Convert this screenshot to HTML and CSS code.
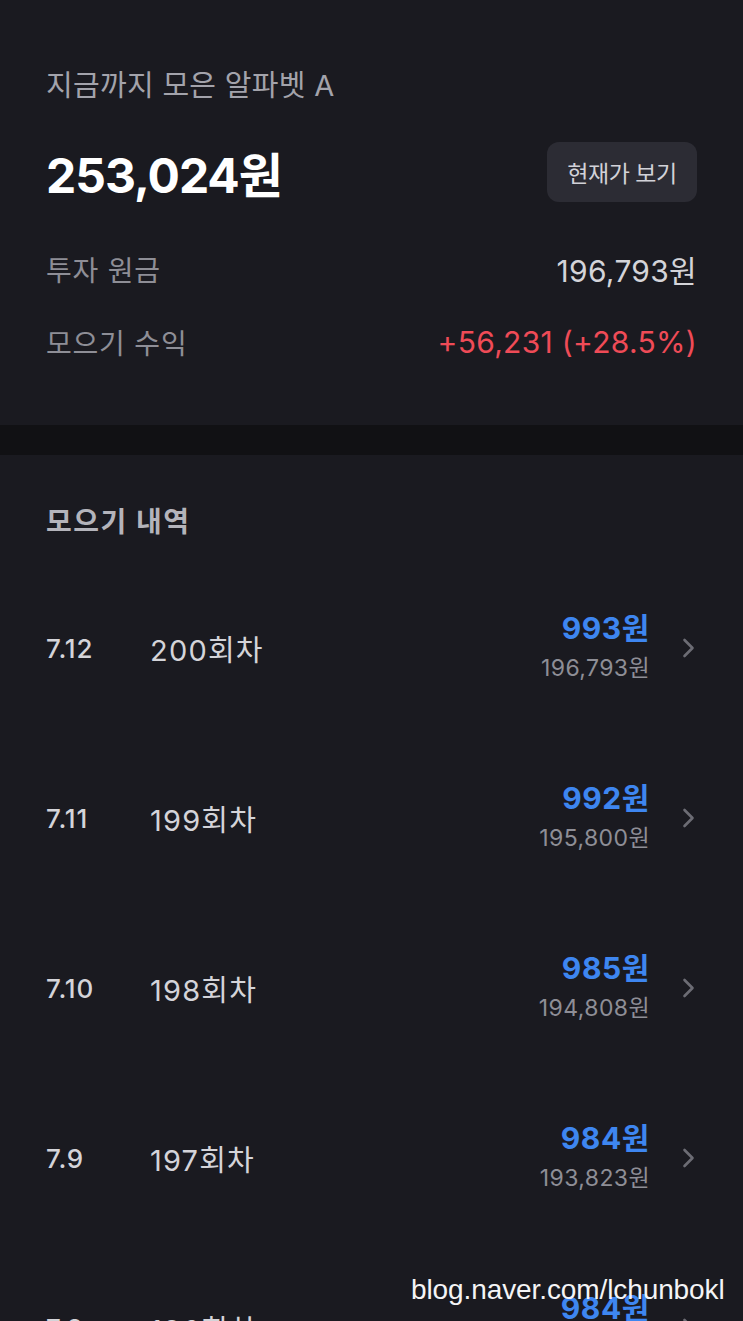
FILE: index.html
```html
<!DOCTYPE html>
<html lang="ko">
<head>
	<meta charset="UTF-8">
	<meta name="viewport" content="width=device-width, initial-scale=1.0">
	<title>알파벳 A 모으기</title>
	<link rel="stylesheet" href="styles.css">
</head>
<body>
	<div class="summary">
		<div class="summary-title">지금까지 모은 알파벳 A</div>
		<div class="hero">
			<span class="hero-amount">253,024원</span>
			<button class="price-button">현재가 보기</button>
		</div>
		<div class="stat-row">
			<span class="stat-label">투자 원금</span>
			<span class="stat-value">196,793원</span>
		</div>
		<div class="stat-row second">
			<span class="stat-label">모으기 수익</span>
			<span class="stat-value profit">+56,231 (+28.5%)</span>
		</div>
	</div>

	<div class="divider"></div>

	<div class="history">
		<div class="history-title">모으기 내역</div>
		<div class="history-list" id="history-list">
			<!-- Rows are populated here -->
		</div>
	</div>

	<div class="watermark">blog.naver.com/lchunbokl</div>

	<script>
		const rows = [
			{ date: '7.12', round: 200, price: '993원', total: '196,793원' },
			{ date: '7.11', round: 199, price: '992원', total: '195,800원' },
			{ date: '7.10', round: 198, price: '985원', total: '194,808원' },
			{ date: '7.9', round: 197, price: '984원', total: '193,823원' },
			{ date: '7.8', round: 196, price: '984원', total: '192,839원' }
		];

		const listElement = document.getElementById('history-list');

		rows.forEach(row => {
			const item = document.createElement('div');
			item.className = 'history-item';
			item.innerHTML = `
				<span class="item-date">${row.date}</span>
				<span class="item-round">${row.round}회차</span>
				<span class="item-amounts">
					<span class="item-price">${row.price}</span>
					<span class="item-total">${row.total}</span>
				</span>
				<svg class="chevron" width="17" height="24" viewBox="0 0 17 24">
					<path d="M4.5 4 L12.5 12 L4.5 20" fill="none" stroke="currentColor" stroke-width="2.6" stroke-linecap="round" stroke-linejoin="round"/>
				</svg>`;
			listElement.appendChild(item);
		});
	</script>
</body>
</html>
```

FILE: styles.css
```css
:root {
	--page-padding: 46px;
	--bg: #1a1a20;
	--band: #111114;
	--text-strong: #ffffff;
	--text-main: #d4d4d9;
	--text-sub: #8e8e96;
	--blue: #3e86f0;
	--red: #ef4b57;
}

* {
	box-sizing: border-box;
}

html,
body {
	margin: 0;
	padding: 0;
	height: 1321px;
	overflow: hidden;
}

body {
	position: relative;
	background-color: var(--bg);
	color: var(--text-main);
	font-family: Inter, "Noto Sans CJK KR", sans-serif;
}

.summary {
	padding: 60px var(--page-padding) 63px;
}

.summary-title {
	font-size: 29px;
	line-height: 52px;
	letter-spacing: 0.3px;
	color: #a3a3ab;
}

.hero {
	display: flex;
	justify-content: space-between;
	align-items: center;
	height: 60px;
	margin-top: 30px;
}

.hero-amount {
	font-size: 48px;
	font-weight: 700;
	letter-spacing: -1px;
	color: var(--text-strong);
}

.price-button {
	border: none;
	height: 60px;
	width: 150px;
	border-radius: 12px;
	background: #2c2c34;
	color: #d2d2d8;
	font-family: inherit;
	font-size: 23px;
	letter-spacing: -0.5px;
	cursor: pointer;
}

.stat-row {
	display: flex;
	justify-content: space-between;
	align-items: center;
	height: 40px;
	margin-top: 47px;
}

.stat-row.second {
	margin-top: 33px;
}

.stat-label {
	font-size: 28px;
	letter-spacing: 0.8px;
	color: var(--text-sub);
}

.stat-value {
	font-size: 30px;
	letter-spacing: 0.3px;
	color: var(--text-main);
}

.stat-value.profit {
	color: var(--red);
}

.divider {
	height: 30px;
	background-color: var(--band);
}

.history {
	padding: 47px var(--page-padding) 0;
}

.history-title {
	font-size: 28px;
	line-height: 40px;
	font-weight: 700;
	letter-spacing: 1.5px;
	color: #b4b4bb;
	margin-bottom: 21px;
}

.history-item {
	display: flex;
	align-items: center;
	height: 170px;
}

.item-date {
	width: 104px;
	font-size: 26px;
	font-weight: 500;
	letter-spacing: 0.8px;
	color: var(--text-main);
}

.item-round {
	flex: 1;
	font-size: 29px;
	letter-spacing: 1.2px;
	color: var(--text-main);
}

.item-amounts {
	display: flex;
	flex-direction: column;
	align-items: flex-end;
}

.item-price {
	font-size: 30px;
	line-height: 40px;
	font-weight: 700;
	letter-spacing: 0.6px;
	color: var(--blue);
}

.item-total {
	font-size: 23px;
	line-height: 40px;
	letter-spacing: 0.4px;
	color: var(--text-sub);
}

.chevron {
	margin-left: 30px;
	color: #6c6c74;
}

.watermark {
	position: absolute;
	left: 411px;
	top: 1271px;
	font-family: "Liberation Sans", sans-serif;
	font-size: 28px;
	line-height: 38px;
	letter-spacing: -0.1px;
	color: #f4f4f6;
}
```
